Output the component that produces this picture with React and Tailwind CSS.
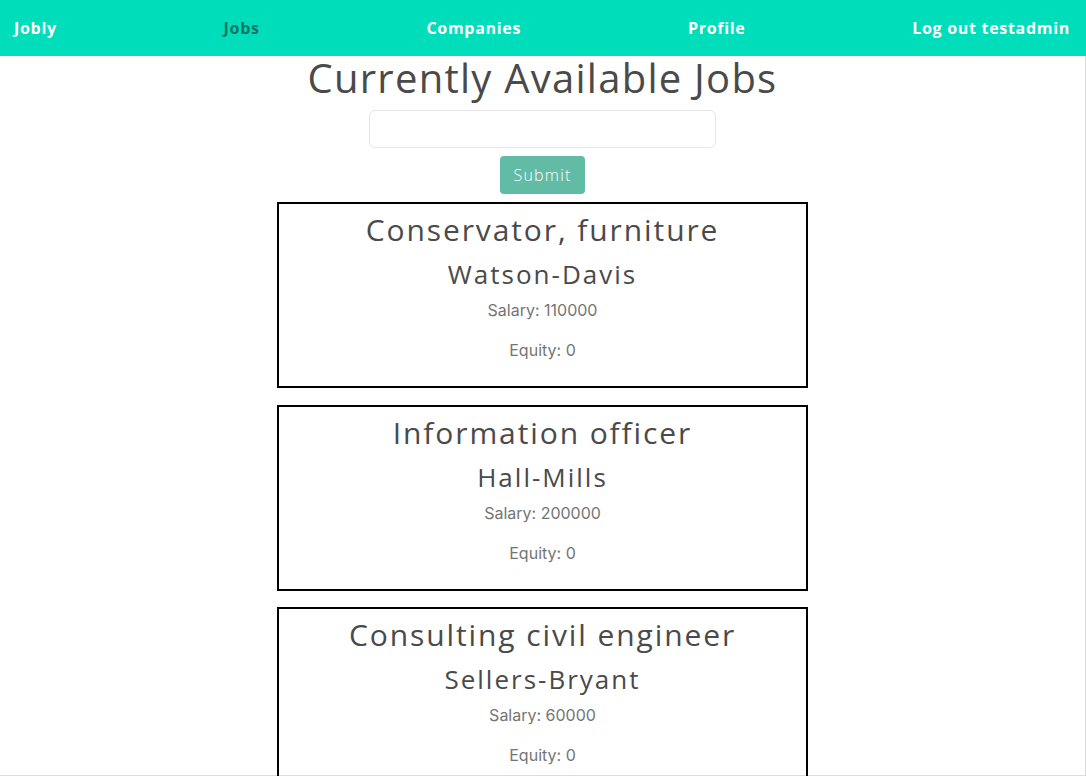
const jobs = [
    { title: 'Conservator, furniture', company: 'Watson-Davis', salary: 110000, equity: 0 },
    { title: 'Information officer', company: 'Hall-Mills', salary: 200000, equity: 0 },
    { title: 'Consulting civil engineer', company: 'Sellers-Bryant', salary: 60000, equity: 0 },
]

const heading = { fontFamily: '"Open Sans", "Noto Sans", sans-serif' }

function NavBar() {
    return (
        <nav
            className="flex h-14 items-center justify-between bg-[#00ddbb] pl-[14px] pr-[16px] text-[16px] font-bold tracking-[0.7px] text-white"
            style={heading}
        >
            <a href="#">Jobly</a>
            <a href="#" className="text-[#0f7564]">Jobs</a>
            <a href="#">Companies</a>
            <a href="#">Profile</a>
            <a href="#">Log out testadmin</a>
        </nav>
    )
}

function JobCard({ job }) {
    return (
        <div className="flex h-[186px] w-[531px] flex-col items-center border-2 border-black pt-2 text-[#4a4a4a]">
            <h2 className="text-[30px] leading-9 tracking-[1.9px]" style={heading}>
                {job.title}
            </h2>
            <h3 className="mt-[10px] text-[26px] leading-8 tracking-[2px]" style={heading}>
                {job.company}
            </h3>
            <p className="mt-2 font-['Inter'] text-[16px] leading-6 text-[#757575]">
                Salary: {job.salary}
            </p>
            <p className="mt-4 font-['Inter'] text-[16px] leading-6 text-[#757575]">
                Equity: {job.equity}
            </p>
        </div>
    )
}

export default function App() {
    return (
        <div className="h-[776px] overflow-hidden bg-white">
            <NavBar />
            <main className="flex h-[720px] flex-col items-center border-r border-b border-[#dcdcdc]">
                <h1 className="text-[40px] leading-[44px] tracking-[1.25px] text-[#4a4a4a]" style={heading}>
                    Currently Available Jobs
                </h1>
                <form className="mt-[10px] flex flex-col items-center gap-2">
                    <input
                        type="text"
                        className="h-[38px] w-[347px] rounded-md border border-[#e6e6e6] px-3 outline-none"
                    />
                    <button
                        type="button"
                        className="h-[38px] w-[85px] rounded bg-[#62bca5] text-[16px] font-light tracking-[1.2px] text-white"
                        style={heading}
                    >
                        Submit
                    </button>
                </form>
                <div className="mt-2 flex flex-col gap-[16.5px]">
                    {jobs.map((job) => (
                        <JobCard key={job.title} job={job} />
                    ))}
                </div>
            </main>
        </div>
    )
}
